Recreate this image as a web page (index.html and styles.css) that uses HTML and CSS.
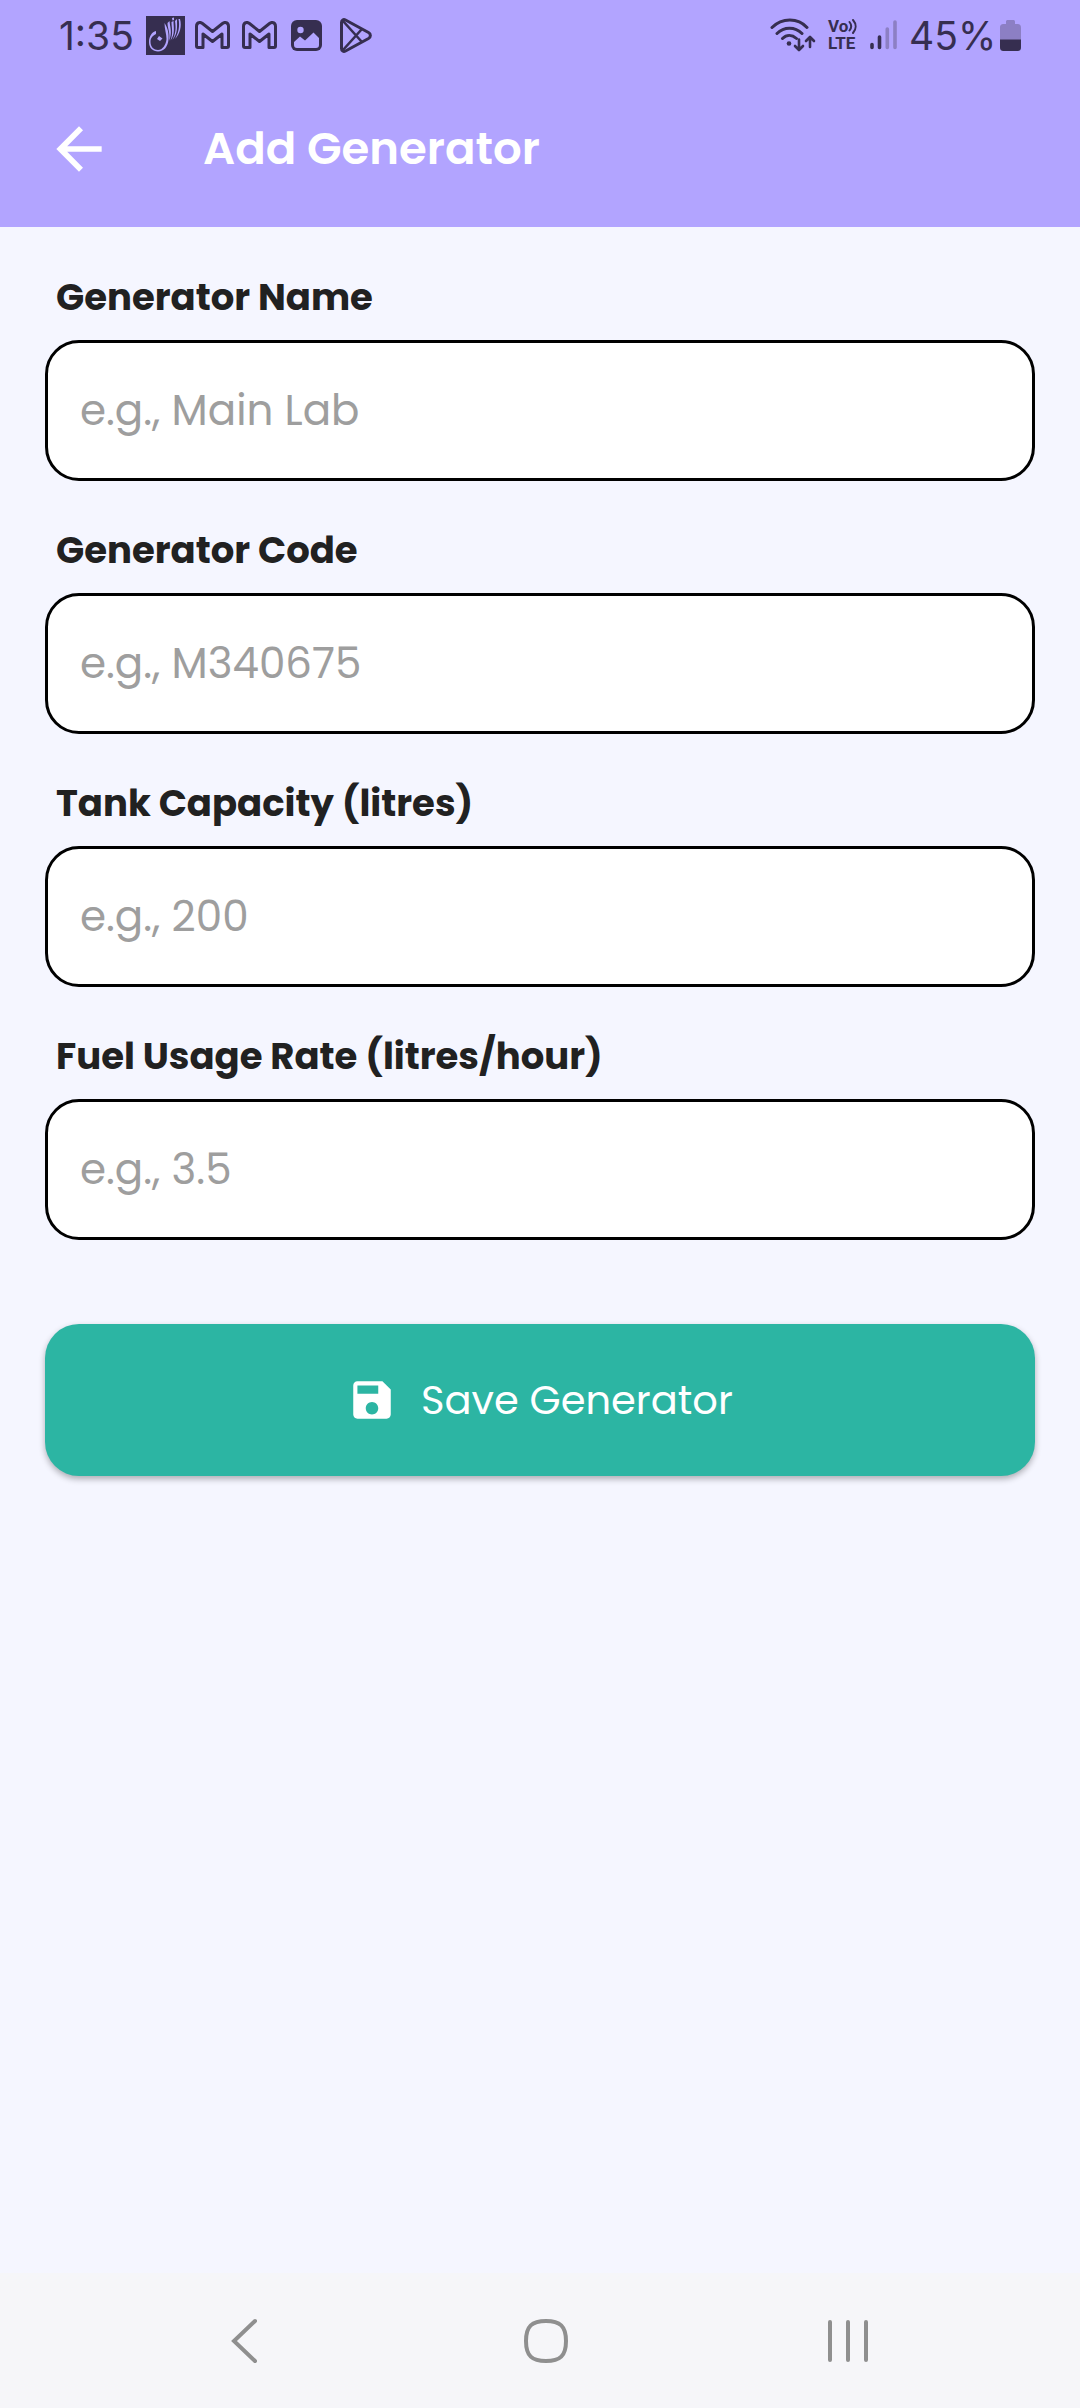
FILE: index.html
```html
<!DOCTYPE html>
<html lang="en">
<head>
<meta charset="utf-8">
<meta name="viewport" content="width=device-width, initial-scale=1">
<title>Add Generator</title>
<link rel="stylesheet" href="styles.css">
</head>
<body>
<header class="top">
  <div class="status">
    <div class="status-left">
      <span class="clock">1:35</span>
      <svg class="app-icon" width="39" height="39" viewBox="0 0 39 39" aria-hidden="true">
        <rect width="39" height="39" fill="#362e50"/>
        <g fill="#b2a4ff">
          <path d="M10 15C6 16 3 20 3 26c0 6 4 9.500 9 9.500 6 0 10-5 10.500-12C23 18 22 12 18.500 7c0 6 2 11 2 16-.5 6-4 11-8.500 11-4 0-7.500-3-7.500-8 0-4 2-6 5.500-8z"/>
          <path d="M21.500 7c0 6 3 9 1.500 18 3.500-8 1-14 .5-20zM25.500 6c0 6 2 11-1 18.500 5-7 3-13 3-19.500zM29 5c1 7 1 12-2.500 19C32 17 31 11 31 3zM32.500 3c1.500 7 0 14-3.500 20 5-5 7-13 5-20z"/>
          <path d="M13 20l3.500 2.500L14 25l-3-2zM26 2l2-.5V4l-1.500.5z"/>
        </g>
      </svg>
      <svg width="35" height="28" viewBox="0 0 35 28" aria-hidden="true"><path d="M1.500 25V5.500c0-4 3.500-5 6-3l10 8 10-8c2.500-2 6-1 6 3V25c0 1-.5 1.500-1.500 1.500H27V13l-9.500 7.500L8 13v13.500H3c-1 0-1.500-.5-1.500-1.500z" fill="none" stroke="#362e50" stroke-width="3" stroke-linejoin="round"/></svg>
      <svg width="35" height="28" viewBox="0 0 35 28" aria-hidden="true"><path d="M1.500 25V5.500c0-4 3.500-5 6-3l10 8 10-8c2.500-2 6-1 6 3V25c0 1-.5 1.500-1.500 1.500H27V13l-9.500 7.500L8 13v13.500H3c-1 0-1.500-.5-1.500-1.500z" fill="none" stroke="#362e50" stroke-width="3" stroke-linejoin="round"/></svg>
      <svg class="photo" width="31" height="31" viewBox="0 0 31 31" aria-hidden="true"><rect width="31" height="31" rx="6" fill="#362e50"/><circle cx="9.500" cy="10" r="3.200" fill="#b2a4ff"/><path d="M3 22l6-5.500 5 4 8.500-8L28 18v7c0 2-1 3-3 3H6c-2 0-3-1-3-3z" fill="#b2a4ff"/></svg>
      <svg class="play" width="32" height="35" viewBox="0 0 32 35" fill="none" stroke="#362e50" stroke-width="3" stroke-linejoin="round" aria-hidden="true"><path d="M1.500 4.500c0-2.500 2-3.500 4-2.500L28.500 14.500c2.500 1.500 2.500 4.500 0 6L5.500 33c-2 1-4 0-4-2.500z"/><path d="M3 3l18.500 20.500M3 32l18.500-20.500" stroke-width="2.600"/></svg>
    </div>
    <div class="status-right">
      <svg width="46" height="34" viewBox="0 0 46 34" fill="none" stroke="#362e50" stroke-linecap="round" aria-hidden="true">
        <path d="M2 9.500C12-.5 28-.5 37 9.500M7 15.500c7-7 18-7 25 0M12.500 20.500c4-4 9.500-4 14 0" stroke-width="3"/>
        <circle cx="19" cy="25.500" r="2.300" fill="#362e50" stroke="none"/>
        <path d="M29 21.500v10M25 28l4 4 4-4M40 29V19.500M36 23l4-4 4 4" stroke-width="2.600" stroke-linejoin="round"/>
      </svg>
      <span class="volte">
        <span class="volte-row">Vo<svg width="9" height="16" viewBox="0 0 9 16" fill="none" stroke="#362e50" stroke-width="2" stroke-linecap="round" aria-hidden="true"><path d="M1.500 4c2 2.500 2 6 0 8.500M5 2c3.500 4 3.500 9 0 13"/></svg></span>
        <span class="volte-row">LTE</span>
      </span>
      <svg width="27" height="30" viewBox="0 0 27 30" stroke-width="3.600" stroke-linecap="round" aria-hidden="true"><path d="M2 24.500v3M9.500 17v10.500" stroke="#362e50"/><path d="M17.300 9v18.500M25 2v25.500" stroke="#8c7fc4"/></svg>
      <span class="percent">45%</span>
      <svg width="21" height="31" viewBox="0 0 21 31" aria-hidden="true"><path d="M6 4V2c0-1.500.5-2 2-2h5c1.500 0 2 .5 2 2v2h2c3 0 4 1 4 4v12H0V8c0-3 1-4 4-4z" fill="#8c7fc4"/><path d="M0 19.500h21V27c0 3-1 4-4 4H4c-3 0-4-1-4-4z" fill="#362e50"/></svg>
    </div>
  </div>
  <div class="app-bar">
    <button class="back" type="button" aria-label="Back"><svg width="68" height="68" viewBox="0 0 24 24" fill="#fff" aria-hidden="true"><path d="M20 11H7.830l5.590-5.590L12 4l-8 8 8 8 1.410-1.410L7.830 13H20z"/></svg></button>
    <h1 class="title">Add Generator</h1>
  </div>
</header>
<main class="content">
  <form class="form">
    <div class="field"><label class="label" for="name">Generator Name</label><input class="input" id="name" type="text" placeholder="e.g., Main Lab"></div>
    <div class="field"><label class="label" for="code">Generator Code</label><input class="input" id="code" type="text" placeholder="e.g., M340675"></div>
    <div class="field"><label class="label" for="capacity">Tank Capacity (litres)</label><input class="input" id="capacity" type="text" inputmode="decimal" placeholder="e.g., 200"></div>
    <div class="field"><label class="label" for="rate">Fuel Usage Rate (litres/hour)</label><input class="input" id="rate" type="text" inputmode="decimal" placeholder="e.g., 3.5"></div>
    <button class="save" type="button"><svg width="50" height="50" viewBox="0 0 24 24" fill="#fff" aria-hidden="true"><path d="M17 3H5c-1.110 0-2 .9-2 2v14c0 1.100.89 2 2 2h14c1.100 0 2-.9 2-2V7l-4-4zm-5 16c-1.660 0-3-1.340-3-3s1.340-3 3-3 3 1.340 3 3-1.340 3-3 3zm3-10H5V5h10v4z"/></svg>Save Generator</button>
  </form>
</main>
<nav class="nav" aria-label="System navigation">
  <button class="nav-button" type="button" aria-label="Back"><svg width="28" height="46" viewBox="0 0 28 46" fill="none" stroke="#8f8f8f" stroke-width="4" stroke-linecap="round" stroke-linejoin="miter" aria-hidden="true"><path d="M25 3L4 23l21 20"/></svg></button>
  <button class="nav-button" type="button" aria-label="Home"><svg width="44" height="44" viewBox="0 0 44 44" fill="none" stroke="#8f8f8f" stroke-width="4" aria-hidden="true"><path d="M22 2c14 0 20 5 20 20s-6 20-20 20S2 37 2 22 8 2 22 2z"/></svg></button>
  <button class="nav-button" type="button" aria-label="Recent apps"><svg width="40" height="44" viewBox="0 0 40 44" stroke="#8f8f8f" stroke-width="4" stroke-linecap="round" aria-hidden="true"><path d="M2 3v38M20 3v38M38 3v38"/></svg></button>
</nav>
</body>
</html>
```

FILE: styles.css
```css
* {
  box-sizing: border-box;
}

body {
  margin: 0;
  min-height: 100vh;
  display: flex;
  flex-direction: column;
  background: #f5f6ff;
  color: #212121;
  font-family: Poppins, Inter, sans-serif;
}

button {
  padding: 0;
  border: 0;
  background: none;
  font: inherit;
  cursor: pointer;
}

svg {
  display: block;
  flex: none;
}

.top {
  background: #b2a4ff;
}

.status {
  display: flex;
  justify-content: space-between;
  align-items: center;
  height: 70px;
  padding: 0 59px;
  color: #362e50;
  font-family: Inter, sans-serif;
  font-size: 39px;
}

.status-left,
.status-right {
  display: flex;
  align-items: center;
  gap: 12px;
}

.clock {
  width: 75px;
}

.app-icon {
  margin-right: -2px;
}

.photo {
  margin-left: 2px;
}

.play {
  margin-left: 6px;
}

.volte {
  display: flex;
  flex-direction: column;
  width: 30px;
  font-family: Roboto, sans-serif;
  font-size: 17px;
  font-weight: 700;
  line-height: 17px;
}

.volte-row {
  display: flex;
}

.percent {
  width: 79px;
}

.app-bar {
  display: flex;
  align-items: center;
  gap: 90px;
  height: 157px;
  padding: 0 45px;
}

.title {
  margin: 0;
  color: #fff;
  font-size: 45px;
  font-weight: 600;
  line-height: 60px;
}

.content {
  flex: 1;
  padding: 45px;
}

.form {
  display: flex;
  flex-direction: column;
  gap: 44px;
}

.field {
  display: flex;
  flex-direction: column;
  gap: 18px;
}

.label {
  padding: 0 11px;
  font-size: 37px;
  font-weight: 700;
  line-height: 50px;
}

.input {
  width: 100%;
  height: 141px;
  padding: 0 32px;
  border: 3px solid #000;
  border-radius: 34px;
  background: #fff;
  color: #212121;
  font-family: inherit;
  font-size: 42px;
}

.input::placeholder {
  color: #9e9e9e;
  opacity: 1;
}

.save {
  display: flex;
  justify-content: center;
  align-items: center;
  gap: 24px;
  height: 152px;
  margin-top: 40px;
  border-radius: 34px;
  background: #2cb5a3;
  box-shadow: 0 3px 6px rgba(0, 0, 0, 0.3);
  color: #fff;
  font-size: 40px;
}

.nav {
  display: grid;
  grid-template-columns: repeat(3, 1fr);
  height: 135px;
  padding: 0 81px 0 93px;
  background: #f6f6f9;
}

.nav-button {
  display: flex;
  justify-content: center;
  align-items: center;
}
```
